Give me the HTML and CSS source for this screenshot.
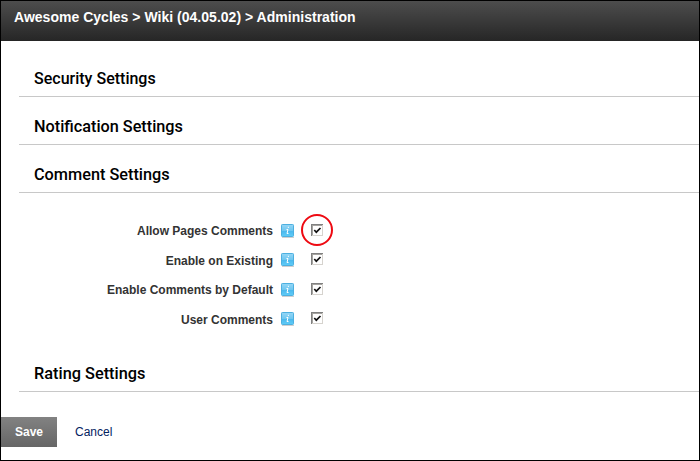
FILE: index.html
```html
<!DOCTYPE html>
<html lang="en">
<head>
<meta charset="utf-8">
<title>Wiki Administration</title>
<link rel="stylesheet" href="styles.css">
</head>
<body>
<svg width="0" height="0" class="defs">
  <defs>
    <linearGradient id="blue" x1="0" y1="0" x2="0" y2="1"><stop offset="0" stop-color="#96d7f6"/><stop offset=".5" stop-color="#70c7f0"/><stop offset=".55" stop-color="#4bb8ed"/><stop offset="1" stop-color="#60cdf8"/></linearGradient>
    <symbol id="info" viewBox="0 0 14 15">
      <path d="M1 13.500h12" stroke="#d0d0d0"/>
      <rect x=".5" y=".5" width="12" height="12" rx=".8" fill="url(#blue)" stroke="#4db0e0"/>
      <path d="M5.500 5.500H7L6 9.500h1.500M6.800 3.300H8" fill="none" stroke="#fff"/>
    </symbol>
    <symbol id="check" viewBox="0 0 13 13">
      <path d="M0 0h12v12H0z" fill="#d6d3ce"/>
      <path d="M0 0h12v1H1v11H0z" fill="#808080"/>
      <path d="M1 1h10v1H2v9H1z" fill="#a5a39f"/>
      <path d="M2 2h9v9H2z" fill="#fff"/>
      <path d="M3.300 6l2 2.200L9.500 4" fill="none" stroke="#111" stroke-width="1.700"/>
    </symbol>
  </defs>
</svg>
<div class="page">
  <header class="topbar">Awesome Cycles &gt; Wiki (04.05.02) &gt; Administration</header>
  <main class="sections">
    <h2><span class="security">Security Settings</span></h2>
    <h2><span class="notification">Notification Settings</span></h2>
    <h2><span class="comment">Comment Settings</span></h2>
    <div class="options">
      <div class="row"><label>Allow Pages Comments</label><svg class="info"><use href="#info"/></svg><span class="box ringed"><svg class="check"><use href="#check"/></svg></span></div>
      <div class="row"><label>Enable on Existing</label><svg class="info"><use href="#info"/></svg><span class="box"><svg class="check"><use href="#check"/></svg></span></div>
      <div class="row"><label>Enable Comments by Default</label><svg class="info"><use href="#info"/></svg><span class="box"><svg class="check"><use href="#check"/></svg></span></div>
      <div class="row"><label>User Comments</label><svg class="info"><use href="#info"/></svg><span class="box"><svg class="check"><use href="#check"/></svg></span></div>
    </div>
    <h2><span class="rating">Rating Settings</span></h2>
  </main>
  <footer class="actions"><button class="save">Save</button><a class="cancel">Cancel</a></footer>
</div>
</body>
</html>
```
FILE: styles.css
```css
*, *::after { box-sizing: border-box; }
body { margin: 0; font-family: "Liberation Sans", Arial, sans-serif; }
.defs { display: block; }
.page { width: 700px; height: 461px; border: 1px solid #000; background: #fff; overflow: hidden; }
.topbar { height: 40px; padding: 8px 13px; background: linear-gradient(#4d4d4d, #262626); color: #fff; font-size: 14px; font-weight: bold; line-height: 16px; letter-spacing: .02px; }
.sections { padding: 8px 0 0 18px; }
h2 { display: flex; height: 48px; margin: 0; padding: 17px 0 0 14.5px; border-bottom: 1px solid #c8c8c8; font: 500 17px/24px Roboto, sans-serif; color: #000; }
h2 span { transform-origin: 0 0; white-space: nowrap; }
.security { transform: scaleX(.942); }
.notification { transform: scaleX(.955); }
.comment { transform: scaleX(.957); }
.rating { transform: scaleX(.96); }
.options { padding-top: 23px; height: 151px; }
.row { display: flex; align-items: center; height: 29.5px; }
.row label { width: 254px; text-align: right; font-size: 12px; font-weight: bold; line-height: 14px; color: #333; padding-top: 1px; }
.info { width: 14px; height: 15px; margin: 1px 0 0 8px; }
.box { display: flex; position: relative; margin: 0 0 1px 16px; }
.check { width: 13px; height: 13px; }
.ringed::after { content: ""; position: absolute; left: -10px; top: -10px; width: 32px; height: 32px; border: 2px solid #ee0a12; border-radius: 50%; }
.actions { display: flex; align-items: center; margin-top: 25px; }
.save { width: 56px; height: 30px; padding: 0; border: 0; background: linear-gradient(#828282, #666); color: #fff; font: bold 12px "Liberation Sans", Arial, sans-serif; }
.cancel { margin-left: 18px; font-size: 12px; color: #03225f; }
```
